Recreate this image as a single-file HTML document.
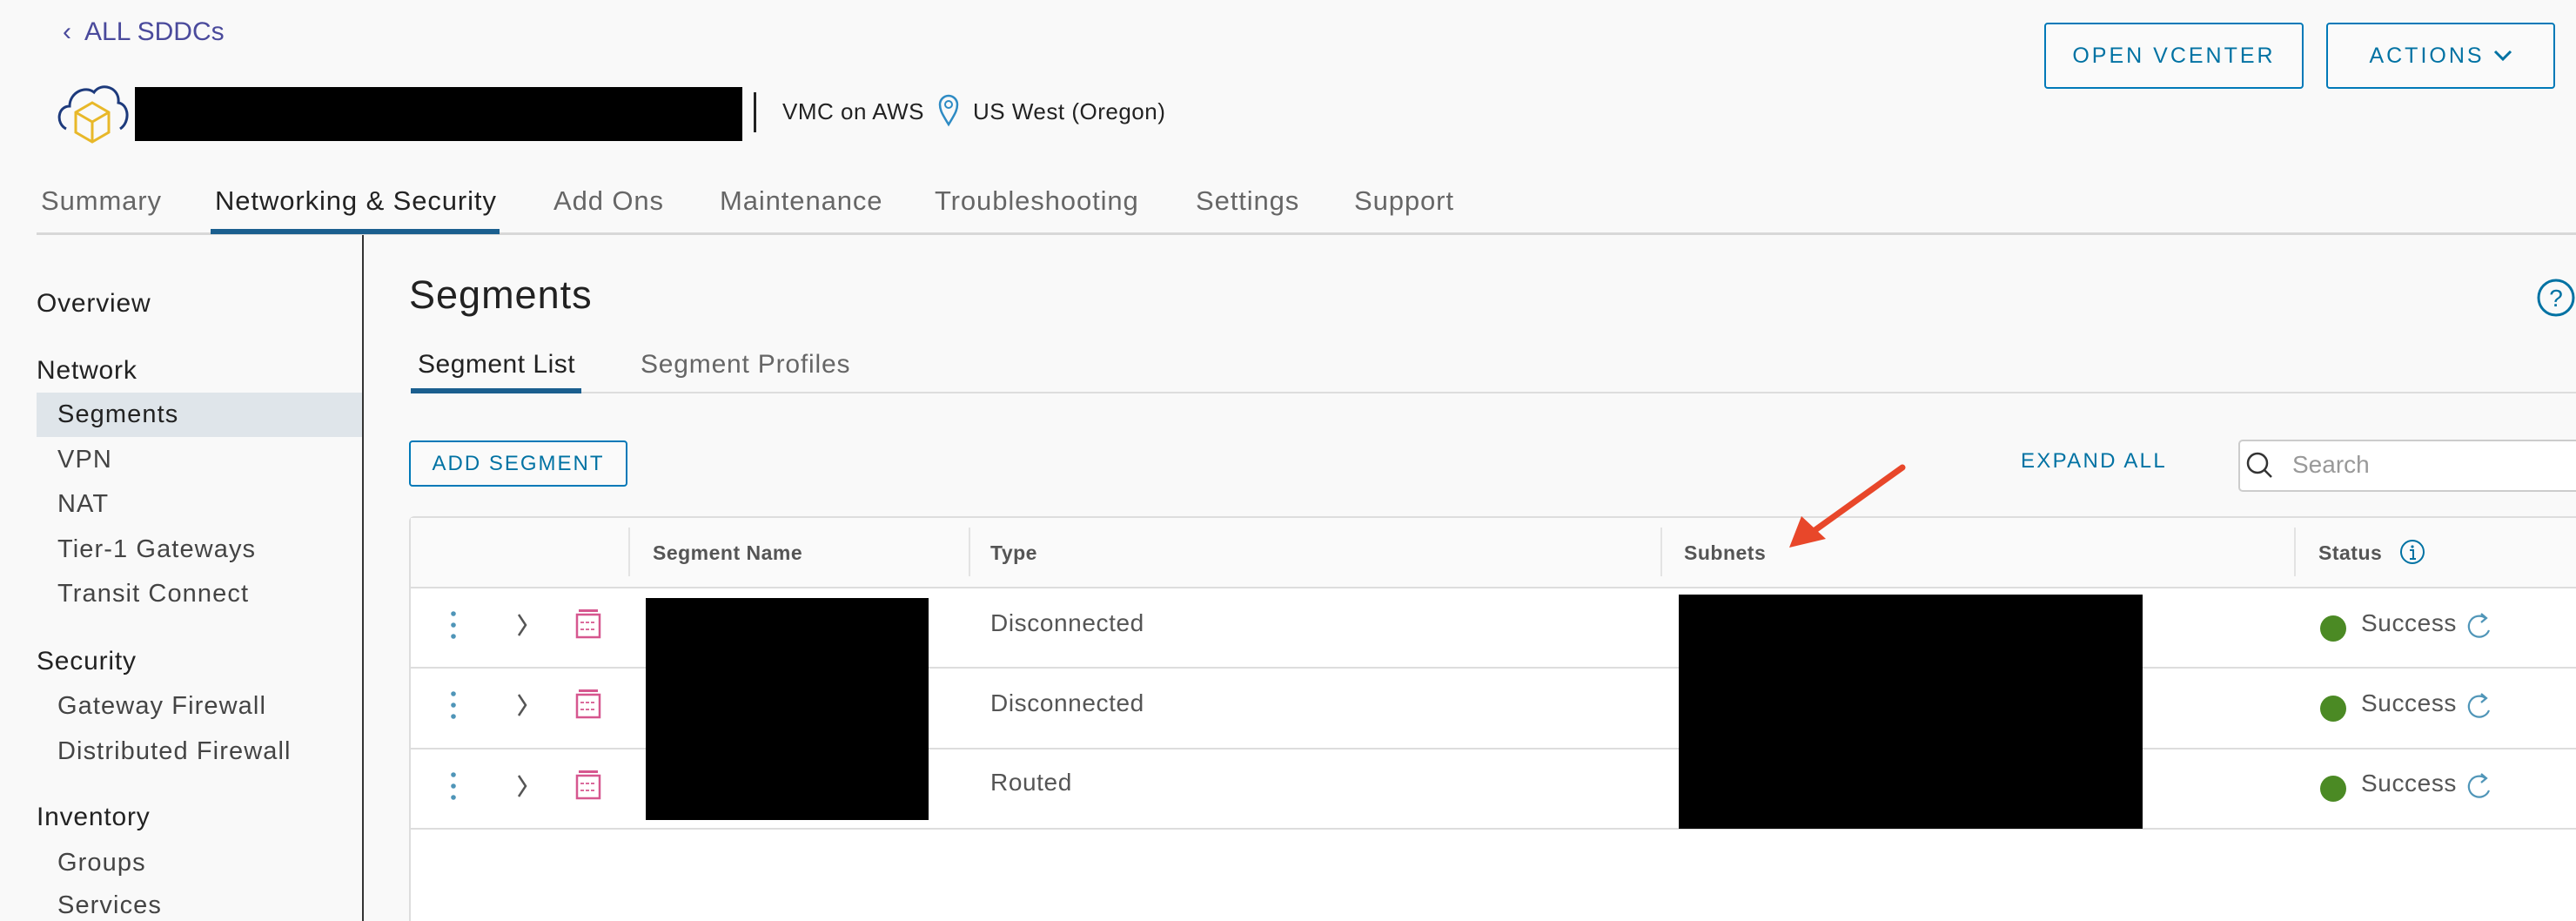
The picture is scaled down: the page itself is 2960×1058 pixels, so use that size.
<!DOCTYPE html>
<html><head><meta charset="utf-8"><style>
*{margin:0;padding:0;box-sizing:border-box}
html{width:2960px;height:1058px;overflow:hidden}
body{width:2960px;height:1058px;background:#f9f9f9;font-family:"Liberation Sans",sans-serif;position:relative;overflow:hidden;color:#333}
.a{position:absolute;white-space:nowrap}
.t{font-size:31px;color:#666;top:213px;letter-spacing:0.9px}
.s{font-size:29px;color:#444;letter-spacing:1.1px}
.h{font-size:30px;color:#222;letter-spacing:0.8px}
.btn{position:absolute;border:2px solid #0079b8;border-radius:4px;color:#0072a3;font-size:25px;letter-spacing:3px;display:flex;align-items:center;justify-content:center;background:#fafafa}
.th{font-size:23px;font-weight:bold;color:#555;top:622px;letter-spacing:0.5px}
.sep{position:absolute;width:2px;background:#e3e3e3;top:606px;height:56px}
.row{position:absolute;left:472px;width:2488px;background:#fff;border-bottom:2px solid #ddd}
.cell{font-size:28px;color:#555;letter-spacing:0.6px}
</style></head><body>
<div class="a" style="left:72px;top:20px;font-size:30px;color:#4a4a9c">‹&nbsp; ALL SDDCs</div>
<svg class="a" style="left:62px;top:92px" width="90" height="78" viewBox="0 0 90 78">
<path d="M14 56 C2 50 4 30 18 30 C18 14 36 6 46 14 C54 2 76 8 74 26 C86 28 88 48 76 56" fill="none" stroke="#1d3a7c" stroke-width="3"/>
<path d="M44 26 L63 37 L63 60 L44 71 L25 60 L25 37 Z M25 37 L44 48 L63 37 M44 48 L44 71" fill="none" stroke="#e8b829" stroke-width="3"/>
</svg>
<div class="a" style="left:155px;top:100px;width:698px;height:62px;background:#000"></div>
<div class="a" style="left:866px;top:106px;width:3px;height:46px;background:#222"></div>
<div class="a" style="left:899px;top:113px;font-size:26px;color:#222;letter-spacing:0.5px">VMC on AWS</div>
<svg class="a" style="left:1078px;top:108px" width="24" height="38" viewBox="0 0 24 38"><path d="M12 35 C4 22 2 18 2 12 A10 10 0 0 1 22 12 C22 18 20 22 12 35Z" fill="none" stroke="#2e8bc4" stroke-width="2.5"/><circle cx="12" cy="12" r="4" fill="none" stroke="#2e8bc4" stroke-width="2"/></svg>
<div class="a" style="left:1118px;top:113px;font-size:26px;color:#222;letter-spacing:0.5px">US West (Oregon)</div>
<div class="btn" style="left:2349px;top:26px;width:298px;height:76px">OPEN VCENTER</div>
<div class="btn" style="left:2673px;top:26px;width:263px;height:76px">ACTIONS&nbsp;<svg width="22" height="14" viewBox="0 0 22 14"><path d="M2 2 L11 11 L20 2" fill="none" stroke="#0072a3" stroke-width="3"/></svg></div>

<div class="a t" style="left:47px">Summary</div>
<div class="a t" style="left:247px;color:#222">Networking &amp; Security</div>
<div class="a t" style="left:636px">Add Ons</div>
<div class="a t" style="left:827px">Maintenance</div>
<div class="a t" style="left:1074px">Troubleshooting</div>
<div class="a t" style="left:1374px">Settings</div>
<div class="a t" style="left:1556px">Support</div>
<div class="a" style="left:42px;top:267px;width:2918px;height:3px;background:#d8d8d8"></div>
<div class="a" style="left:242px;top:263px;width:332px;height:6px;background:#1b5f8f"></div>

<div class="a" style="left:416px;top:270px;width:2px;height:788px;background:#333"></div>
<div class="a h" style="left:42px;top:332px">Overview</div>
<div class="a h" style="left:42px;top:409px">Network</div>
<div class="a" style="left:42px;top:451px;width:374px;height:51px;background:#dfe5ea"></div>
<div class="a s" style="left:66px;top:460px;color:#222">Segments</div>
<div class="a s" style="left:66px;top:512px">VPN</div>
<div class="a s" style="left:66px;top:563px">NAT</div>
<div class="a s" style="left:66px;top:615px">Tier-1 Gateways</div>
<div class="a s" style="left:66px;top:666px">Transit Connect</div>
<div class="a h" style="left:42px;top:743px">Security</div>
<div class="a s" style="left:66px;top:795px">Gateway Firewall</div>
<div class="a s" style="left:66px;top:847px">Distributed Firewall</div>
<div class="a h" style="left:42px;top:922px">Inventory</div>
<div class="a s" style="left:66px;top:975px">Groups</div>
<div class="a s" style="left:66px;top:1024px">Services</div>

<div class="a" style="left:470px;top:313px;font-size:45px;color:#222;letter-spacing:1px">Segments</div>
<svg class="a" style="left:2914px;top:319px" width="46" height="46" viewBox="0 0 46 46"><circle cx="23" cy="23" r="20" fill="none" stroke="#0072a3" stroke-width="3"/><text x="23" y="33" text-anchor="middle" font-size="28" fill="#0072a3" font-family="Liberation Sans">?</text></svg>
<div class="a" style="left:480px;top:402px;font-size:30px;color:#222;letter-spacing:0.5px">Segment List</div>
<div class="a" style="left:736px;top:402px;font-size:30px;color:#666;letter-spacing:0.8px">Segment Profiles</div>
<div class="a" style="left:472px;top:450px;width:2488px;height:2px;background:#ddd"></div>
<div class="a" style="left:472px;top:446px;width:196px;height:6px;background:#1b5f8f"></div>

<div class="btn" style="left:470px;top:506px;width:251px;height:53px;font-size:24px;letter-spacing:2px">ADD SEGMENT</div>
<div class="a" style="left:2322px;top:516px;font-size:24px;color:#0072a3;letter-spacing:2.3px">EXPAND ALL</div>
<div class="a" style="left:2572px;top:505px;width:400px;height:60px;background:#fff;border:2px solid #ccc;border-radius:5px"></div>
<svg class="a" style="left:2580px;top:518px" width="34" height="34" viewBox="0 0 34 34"><circle cx="14" cy="14" r="11" fill="none" stroke="#333" stroke-width="2.5"/><path d="M22 22 L30 30" stroke="#333" stroke-width="2.5"/></svg>
<div class="a" style="left:2634px;top:518px;font-size:28px;color:#999">Search</div>

<div class="a" style="left:470px;top:593px;width:2490px;height:465px;border:2px solid #ddd;border-right:none;border-bottom:none;border-radius:6px 0 0 0;background:#fff"></div>
<div class="a" style="left:472px;top:595px;width:2488px;height:81px;background:#fafafa;border-bottom:2px solid #ddd"></div>
<div class="sep" style="left:722px"></div><div class="sep" style="left:1113px"></div><div class="sep" style="left:1908px"></div><div class="sep" style="left:2636px"></div>
<div class="a th" style="left:750px">Segment Name</div>
<div class="a th" style="left:1138px">Type</div>
<div class="a th" style="left:1935px">Subnets</div>
<div class="a th" style="left:2664px">Status</div>
<svg class="a" style="left:2756px;top:618px" width="32" height="32" viewBox="0 0 32 32"><circle cx="16" cy="16" r="13" fill="none" stroke="#0072a3" stroke-width="2"/><circle cx="16" cy="10" r="1.6" fill="#0072a3"/><path d="M13 14h4v10M13 24h7" fill="none" stroke="#0072a3" stroke-width="2"/></svg>

<div class="row" style="top:676px;height:92px"></div>
<div class="row" style="top:768px;height:93px"></div>
<div class="row" style="top:861px;height:92px"></div>

<svg class="a" style="left:500px;top:690px" width="200" height="260" viewBox="0 0 200 260">
<g id="ri">
<circle cx="21" cy="15" r="2.8" fill="#4f95b8"/><circle cx="21" cy="28" r="2.8" fill="#4f95b8"/><circle cx="21" cy="41" r="2.8" fill="#4f95b8"/>
<path d="M96 16 L104 28 L96 40" fill="none" stroke="#555" stroke-width="2.5"/>
<rect x="165" y="10" width="22" height="3" fill="#d6578f"/>
<rect x="163" y="16" width="26" height="26" fill="none" stroke="#d6578f" stroke-width="2.5"/>
<path d="M167 25h18M167 33h18" stroke="#d6578f" stroke-width="1.8" stroke-dasharray="4 2"/>
</g>
<use href="#ri" y="92"/><use href="#ri" y="185"/>
</svg>

<div class="a cell" style="left:1138px;top:700px">Disconnected</div>
<div class="a cell" style="left:1138px;top:792px">Disconnected</div>
<div class="a cell" style="left:1138px;top:883px">Routed</div>

<div class="a" style="left:742px;top:687px;width:325px;height:255px;background:#000"></div>
<div class="a" style="left:1929px;top:683px;width:533px;height:269px;background:#000"></div>

<svg class="a" style="left:2660px;top:700px" width="220" height="250" viewBox="0 0 220 250">
<g id="st"><circle cx="21" cy="22" r="15" fill="#4b8a24"/>
<path d="M196 10 A12 12 0 1 0 200 24" fill="none" stroke="#4f95b8" stroke-width="2.2"/><path d="M191 5 L197 10 L191 15" fill="none" stroke="#4f95b8" stroke-width="2.2"/></g>
<use href="#st" y="92"/><use href="#st" y="184"/>
</svg>
<div class="a cell" style="left:2713px;top:700px">Success</div>
<div class="a cell" style="left:2713px;top:792px">Success</div>
<div class="a cell" style="left:2713px;top:884px">Success</div>

<svg class="a" style="left:2040px;top:525px" width="160" height="115" viewBox="0 0 160 115">
<path d="M146 12 L40 88" stroke="#e8472a" stroke-width="7" stroke-linecap="round"/>
<path d="M16 104 L30 68 L58 94 Z" fill="#e8472a"/>
</svg>
</body></html>
